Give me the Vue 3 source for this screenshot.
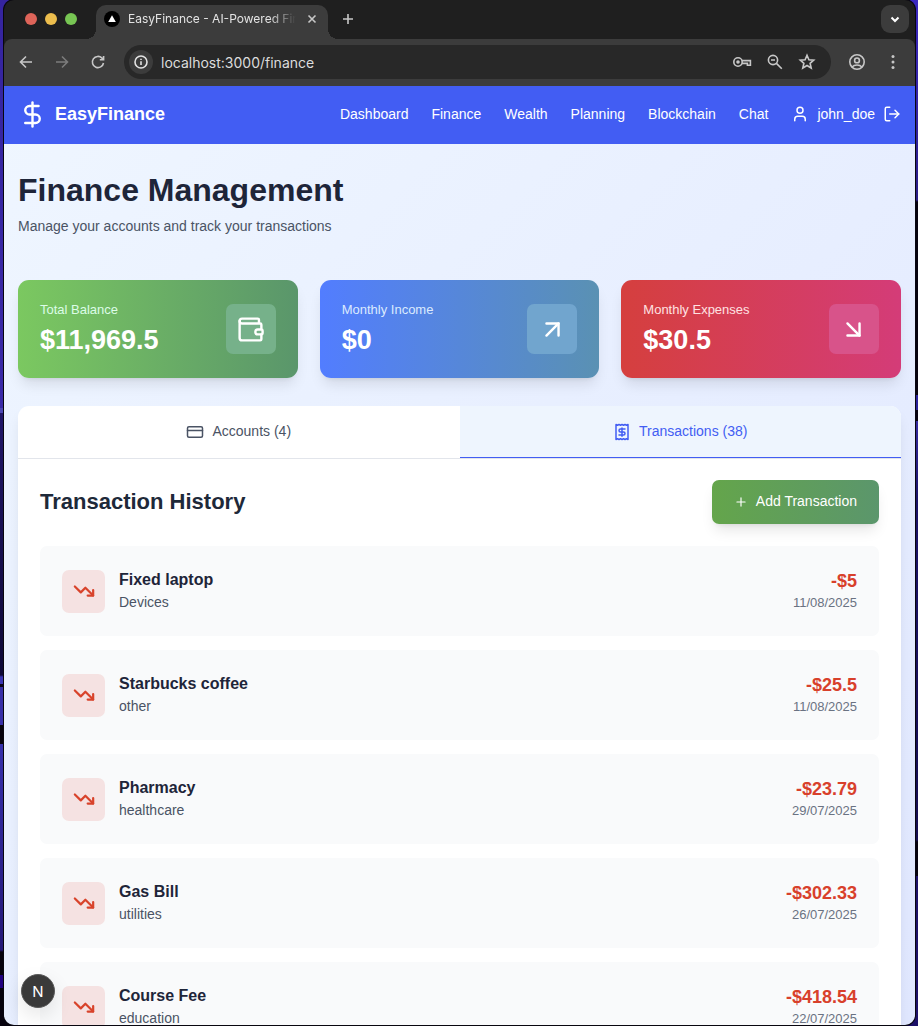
<script setup>
import { ref } from 'vue'

const url = ref('localhost:3000/finance')
const active = ref('transactions')

const links = ['Dashboard', 'Finance', 'Wealth', 'Planning', 'Blockchain', 'Chat']

const icons = {
  dollar: ['M12 2v20', 'M17 5H9.5a3.5 3.5 0 0 0 0 7h5a3.5 3.5 0 0 1 0 7H6'],
  wallet: [
    'M19 7V4a1 1 0 0 0-1-1H5a2 2 0 0 0 0 4h15a1 1 0 0 1 1 1v4h-3a2 2 0 0 0 0 4h3a1 1 0 0 0 1-1v-2a1 1 0 0 0-1-1',
    'M3 5v14a2 2 0 0 0 2 2h15a1 1 0 0 0 1-1v-4'
  ],
  up: ['M7 7h10v10', 'M7 17 17 7'],
  down: ['m7 7 10 10', 'M17 7v10H7'],
  user: ['M19 21v-2a4 4 0 0 0-4-4H9a4 4 0 0 0-4 4v2', 'M16 7a4 4 0 1 1-8 0a4 4 0 1 1 8 0'],
  logout: ['m16 17 5-5-5-5', 'M21 12H9', 'M9 21H5a2 2 0 0 1-2-2V5a2 2 0 0 1 2-2h4'],
  card: ['M4 5h16a2 2 0 0 1 2 2v10a2 2 0 0 1-2 2H4a2 2 0 0 1-2-2V7a2 2 0 0 1 2-2z', 'M2 10h20'],
  receipt: [
    'M4 2v20l2-1 2 1 2-1 2 1 2-1 2 1 2-1 2 1V2l-2 1-2-1-2 1-2-1-2 1-2-1-2 1Z',
    'M16 8h-6a2 2 0 1 0 0 4h4a2 2 0 1 1 0 4H8',
    'M12 17.5v-11'
  ],
  plus: ['M5 12h14', 'M12 5v14'],
  trend: ['m22 17-8.5-8.5-5 5L2 7', 'M16 17h6v-6']
}

const stats = [
  { label: 'Total Balance', value: '$11,969.5', icon: 'wallet', tone: 'green' },
  { label: 'Monthly Income', value: '$0', icon: 'up', tone: 'blue' },
  { label: 'Monthly Expenses', value: '$30.5', icon: 'down', tone: 'red' }
]

const tabs = [
  { id: 'accounts', label: 'Accounts (4)', icon: 'card' },
  { id: 'transactions', label: 'Transactions (38)', icon: 'receipt' }
]

const transactions = [
  { name: 'Fixed laptop', category: 'Devices', amount: '-$5', date: '11/08/2025' },
  { name: 'Starbucks coffee', category: 'other', amount: '-$25.5', date: '11/08/2025' },
  { name: 'Pharmacy', category: 'healthcare', amount: '-$23.79', date: '29/07/2025' },
  { name: 'Gas Bill', category: 'utilities', amount: '-$302.33', date: '26/07/2025' },
  { name: 'Course Fee', category: 'education', amount: '-$418.54', date: '22/07/2025' }
]
</script>

<template>
  <div class="desktop">
    <div class="window">
      <div class="tabstrip">
        <div class="lights">
          <button class="light close" aria-label="Close window"></button>
          <button class="light minimize" aria-label="Minimize window"></button>
          <button class="light zoom" aria-label="Zoom window"></button>
        </div>
        <div class="browser-tab">
          <svg class="favicon" viewBox="0 0 16 16" aria-hidden="true">
            <circle cx="8" cy="8" r="8" fill="#000" />
            <path d="M8 4.2 11.8 11H4.2z" fill="#fff" />
          </svg>
          <span class="tab-title">EasyFinance - AI-Powered Fin</span>
          <button class="plain" aria-label="Close tab">
            <svg width="16" height="16" viewBox="0 0 16 16"><path d="m4.5 4.5 7 7m0-7-7 7" /></svg>
          </button>
        </div>
        <button class="plain new-tab" aria-label="New tab">
          <svg width="16" height="16" viewBox="0 0 16 16"><path d="M8 3v10M3 8h10" /></svg>
        </button>
        <button class="plain tab-search" aria-label="Search tabs">
          <svg width="16" height="16" viewBox="0 0 16 16"><path d="m4.5 6.5 3.5 3.5 3.5-3.5" stroke-width="2" /></svg>
        </button>
      </div>

      <div class="toolbar">
        <div class="history">
          <button class="plain" aria-label="Back">
            <svg width="18" height="18" viewBox="0 0 18 18"><path d="M15 9H3.5M9 3.5 3.5 9 9 14.5" /></svg>
          </button>
          <button class="plain dim" aria-label="Forward">
            <svg width="18" height="18" viewBox="0 0 18 18"><path d="M3 9h11.5M9 3.5 14.5 9 9 14.5" /></svg>
          </button>
          <button class="plain" aria-label="Reload">
            <svg width="18" height="18" viewBox="0 0 18 18"><path d="M14.5 10A5.6 5.6 0 1 1 13 5.1l1.4 1.4M14.6 3v3.8h-3.8" /></svg>
          </button>
        </div>
        <div class="omnibox">
          <button class="plain info" aria-label="Site information">
            <svg width="16" height="16" viewBox="0 0 16 16"><circle cx="8" cy="8" r="6" /><path d="M8 7.3v3.6M8 4.8v1.1" /></svg>
          </button>
          <input v-model="url" class="url" type="text" aria-label="Address" />
          <button class="plain" aria-label="Passwords">
            <svg width="20" height="16" viewBox="0 0 20 16"><circle cx="6" cy="8" r="4.2" /><circle cx="6" cy="8" r="1" fill="currentColor" /><path d="M10 6.6h8.4v4.6h-3V9.4H10" /></svg>
          </button>
          <button class="plain" aria-label="Zoom">
            <svg width="18" height="18" viewBox="0 0 18 18"><circle cx="7" cy="7" r="4.6" /><path d="m10.4 10.4 5.4 5.4M5 7h4" /></svg>
          </button>
          <button class="plain" aria-label="Bookmark">
            <svg width="18" height="18" viewBox="0 0 18 18"><path d="m9 2.3 1.9 4.4 4.8.4-3.6 3.2 1.1 4.7L9 12.5 4.8 15l1.1-4.7L2.3 7.1l4.8-.4z" /></svg>
          </button>
        </div>
        <button class="plain profile" aria-label="Profile">
          <svg width="18" height="18" viewBox="0 0 18 18"><circle cx="9" cy="9" r="7.2" /><circle cx="9" cy="7.4" r="2.4" /><path d="M4 14c1.3-1.4 3-2 5-2s3.7.6 5 2" /></svg>
        </button>
        <button class="plain menu" aria-label="Menu">
          <svg width="18" height="18" viewBox="0 0 18 18"><g fill="currentColor" stroke="none"><circle cx="9" cy="3.6" r="1.5" /><circle cx="9" cy="9" r="1.5" /><circle cx="9" cy="14.4" r="1.5" /></g></svg>
        </button>
      </div>

      <div class="site">
        <header class="navbar">
          <a class="brand" href="#">
            <svg class="icon lg" viewBox="0 0 24 24"><path v-for="d in icons.dollar" :key="d" :d="d" /></svg>
            EasyFinance
          </a>
          <nav class="links">
            <a v-for="l in links" :key="l" href="#">{{ l }}</a>
            <div class="account">
              <a class="user" href="#">
                <svg class="icon sm" viewBox="0 0 24 24"><path v-for="d in icons.user" :key="d" :d="d" /></svg>
                john_doe
              </a>
              <button class="logout" aria-label="Log out">
                <svg class="icon sm" viewBox="0 0 24 24"><path v-for="d in icons.logout" :key="d" :d="d" /></svg>
              </button>
            </div>
          </nav>
        </header>

        <main class="content">
          <h1>Finance Management</h1>
          <p class="subtitle">Manage your accounts and track your transactions</p>

          <section class="stats">
            <article v-for="s in stats" :key="s.label" class="stat" :class="s.tone">
              <div>
                <p class="stat-label">{{ s.label }}</p>
                <p class="stat-value">{{ s.value }}</p>
              </div>
              <span class="stat-icon">
                <svg class="icon lg" viewBox="0 0 24 24"><path v-for="d in icons[s.icon]" :key="d" :d="d" /></svg>
              </span>
            </article>
          </section>

          <section class="panel">
            <div class="tabs">
              <button v-for="t in tabs" :key="t.id" class="tab" :class="{ active: active === t.id }" @click="active = t.id">
                <svg class="icon sm" viewBox="0 0 24 24"><path v-for="d in icons[t.icon]" :key="d" :d="d" /></svg>
                <span>{{ t.label }}</span>
              </button>
            </div>
            <div class="panel-body">
              <div class="panel-head">
                <h2>Transaction History</h2>
                <button class="add">
                  <svg class="icon xs" viewBox="0 0 24 24"><path v-for="d in icons.plus" :key="d" :d="d" /></svg>
                  <span>Add Transaction</span>
                </button>
              </div>
              <ul class="list">
                <li v-for="t in transactions" :key="t.name" class="row">
                  <span class="row-icon">
                    <svg class="icon md" viewBox="0 0 24 24"><path v-for="d in icons.trend" :key="d" :d="d" /></svg>
                  </span>
                  <div class="row-main">
                    <h3>{{ t.name }}</h3>
                    <p class="category">{{ t.category }}</p>
                  </div>
                  <div class="row-end">
                    <p class="amount">{{ t.amount }}</p>
                    <p class="date">{{ t.date }}</p>
                  </div>
                </li>
              </ul>
            </div>
          </section>
        </main>
      </div>
      <button class="dev-badge" aria-label="Open dev tools"><span>N</span></button>
    </div>
  </div>
</template>

<style>
body {
  margin: 0;
}
</style>

<style scoped>
* {
  box-sizing: border-box;
}
h1, h2, h3, p, ul {
  margin: 0;
  padding: 0;
}
button {
  font: inherit;
  color: inherit;
  border: 0;
  background: none;
  padding: 0;
  cursor: pointer;
}
a {
  color: inherit;
  text-decoration: none;
}
.desktop {
  height: 100vh;
  padding: 0 3px 1px 4px;
  overflow: hidden;
  font-family: "Liberation Sans", Arial, sans-serif;
  font-size: 14px;
  background:
    linear-gradient(#35249f 0, #3a2aa8 408px, #4d48b4 408px, #4d48b4 413px, #201668 413px, #0d0838 675px, #3a35b4 677px, #3a35b4 684px, #08041c 684px, #08041c 687px, #372fa8 687px, #372fa8 725px, #06020e 725px, #06020e 744px, #3630ac 744px, #241878 950px, #06020e 952px, #06020e 975px, #200080 975px, #200080 988px, #06020e 988px) left / 50% 100% no-repeat,
    linear-gradient(#3a28c0 0, #2a1c86 200px, #06020e 202px, #06020e 395px, #28209a 395px, #28209a 410px, #06020e 410px, #06020e 421px, #352aa0 421px, #1a1268 500px, #140c50 840px, #06020e 842px, #06020e 876px, #1c1068 876px) right / 50% 100% no-repeat;
}
.window {
  position: relative;
  height: 100%;
  display: flex;
  flex-direction: column;
  overflow: hidden;
  border-radius: 10px;
  background: #1f1f1f;
  box-shadow: 0 0 0 1px #08060f;
}

/* Browser chrome */
.tabstrip {
  flex: none;
  display: flex;
  align-items: center;
  height: 39px;
  padding: 0 6px 0 21px;
  font-family: Inter, Roboto, sans-serif;
  color: #e3e3e3;
}
.lights,
.new-tab,
.tab-search {
  margin-bottom: 2px;
}
.lights {
  display: flex;
  gap: 8px;
  width: 71px;
}
.light {
  width: 12px;
  height: 12px;
  border-radius: 50%;
}
.close { background: #de6459; }
.minimize { background: #ecbd4d; }
.zoom { background: #77c553; }
.browser-tab {
  position: relative;
  display: flex;
  align-items: center;
  align-self: flex-end;
  gap: 8px;
  width: 232px;
  height: 34px;
  padding: 0 8px 6px;
  border-radius: 10px 10px 0 0;
  background: #3c3c3c;
}
.browser-tab::before,
.browser-tab::after {
  content: "";
  position: absolute;
  bottom: 0;
  width: 10px;
  height: 10px;
}
.browser-tab::before {
  right: 100%;
  background: radial-gradient(circle at 0 0, transparent 10px, #3c3c3c 10px);
}
.browser-tab::after {
  left: 100%;
  background: radial-gradient(circle at 100% 0, transparent 10px, #3c3c3c 10px);
}
.favicon {
  flex: none;
  width: 16px;
  height: 16px;
}
.tab-title {
  flex: 1;
  min-width: 0;
  white-space: nowrap;
  font-size: 12px;
  line-height: 16px;
  mask-image: linear-gradient(90deg, #000 84%, transparent);
}
.plain {
  display: flex;
  align-items: center;
  justify-content: center;
  color: #c7c7c7;
}
.plain svg {
  fill: none;
  stroke: currentColor;
  stroke-width: 1.6;
}
.new-tab {
  margin-left: 12px;
}
.tab-search {
  width: 28px;
  height: 28px;
  margin-left: auto;
  border-radius: 9px;
  background: #3c3c3c;
  color: #fff;
}
.toolbar {
  flex: none;
  display: flex;
  align-items: center;
  height: 47px;
  padding: 0 13px 1px;
  border-radius: 8px 8px 0 0;
  background: #3c3c3c;
}
.history {
  display: flex;
  gap: 18px;
  width: 107px;
}
.dim {
  color: #7c7c7c;
}
.omnibox {
  flex: 1;
  display: flex;
  align-items: center;
  gap: 14px;
  height: 34px;
  padding: 0 15px 0 5px;
  border-radius: 17px;
  background: #282828;
}
.info {
  width: 24px;
  height: 24px;
  border-radius: 50%;
  background: #3c3c3c;
  color: #e3e3e3;
}
.url {
  flex: 1;
  min-width: 0;
  margin-left: -6px;
  padding: 0;
  border: 0;
  outline: 0;
  background: none;
  color: #dcdcdc;
  font-family: Inter, Roboto, sans-serif;
  font-size: 14px;
}
.profile {
  margin: 0 18px 0 17px;
}

/* Site */
.site {
  flex: 1;
  min-height: 0;
  overflow: hidden;
  background: linear-gradient(135deg, #eff6ff, #e0e7ff);
}
.icon {
  flex: none;
  fill: none;
  stroke: currentColor;
  stroke-width: 2;
  stroke-linecap: round;
  stroke-linejoin: round;
}
.icon.xs { width: 14px; height: 14px; }
.icon.sm { width: 18px; height: 18px; }
.icon.md { width: 22px; height: 22px; stroke-width: 2.4; }
.icon.lg { width: 29px; height: 29px; }
.navbar {
  display: flex;
  align-items: center;
  justify-content: space-between;
  height: 58px;
  padding: 0 14px 2px;
  background: #425df3;
  color: #fff;
}
.brand {
  display: flex;
  align-items: center;
  gap: 8px;
  font-size: 18px;
  font-weight: 700;
}
.links {
  display: flex;
  align-items: center;
  gap: 23px;
}
.account,
.user {
  display: flex;
  align-items: center;
  gap: 8px;
}
.logout {
  display: flex;
}
.content {
  padding: 28px 14px;
}
h1 {
  font-size: 32px;
  line-height: 36px;
  color: #1e2539;
}
.subtitle {
  margin-top: 7px;
  line-height: 22px;
  color: #4a5364;
}
.stats {
  display: grid;
  grid-template-columns: repeat(3, 1fr);
  gap: 22px;
  margin-top: 43px;
}
.stat {
  display: flex;
  align-items: center;
  justify-content: space-between;
  padding: 22px;
  border-radius: 11px;
  color: #fff;
  box-shadow: 0 9px 14px -3px rgba(0, 0, 0, 0.1), 0 4px 5px -4px rgba(0, 0, 0, 0.1);
}
.green { background: linear-gradient(90deg, #7bc860, #5a966b); }
.blue { background: linear-gradient(90deg, #527dff, #5a91b3); }
.red { background: linear-gradient(90deg, #d53f3e, #d43c78); }
.stat-label {
  font-size: 13px;
  line-height: 16px;
}
.green .stat-label { color: #dcfce7; }
.blue .stat-label { color: #dbeafe; }
.red .stat-label { color: #ffe2e2; }
.stat-value {
  margin-top: 6px;
  font-size: 27px;
  line-height: 32px;
  font-weight: 700;
}
.stat-icon {
  display: flex;
  align-items: center;
  justify-content: center;
  width: 50px;
  height: 50px;
  border-radius: 7px;
}
.green .stat-icon { background: #76b18a; }
.blue .stat-icon { background: #71a5ce; }
.red .stat-icon { background: #d8538a; }
.panel {
  margin-top: 28px;
  overflow: hidden;
  border-radius: 11px;
  background: #fff;
  box-shadow: 0 9px 14px -3px rgba(0, 0, 0, 0.1), 0 4px 5px -4px rgba(0, 0, 0, 0.1);
}
.tabs {
  display: flex;
  border-bottom: 1px solid #e2e5eb;
}
.tab {
  flex: 1;
  display: flex;
  align-items: center;
  justify-content: center;
  gap: 8px;
  height: 52px;
  color: #4a5364;
}
.tab span,
.add span {
  padding-bottom: 2px;
}
.tab.active {
  border-bottom: 1px solid #425df3;
  background: #eef5fe;
  color: #425df3;
}
.panel-body {
  padding: 21px 22px;
}
.panel-head {
  display: flex;
  align-items: center;
  justify-content: space-between;
}
h2 {
  font-size: 22px;
  line-height: 28px;
  color: #1e2939;
}
.add {
  display: flex;
  align-items: center;
  gap: 8px;
  height: 44px;
  padding: 0 22px;
  border-radius: 7px;
  background: linear-gradient(90deg, #64a54b, #5b966c);
  color: #fff;
  box-shadow: 0 9px 14px -3px rgba(0, 0, 0, 0.1), 0 4px 5px -4px rgba(0, 0, 0, 0.1);
}
.list {
  display: grid;
  gap: 14px;
  margin-top: 22px;
  list-style: none;
}
.row {
  display: flex;
  align-items: center;
  gap: 14px;
  padding: 22px;
  border-radius: 7px;
  background: #f9fafb;
}
.row-icon {
  display: flex;
  align-items: center;
  justify-content: center;
  width: 43px;
  height: 43px;
  border-radius: 7px;
  background: #f5e2e2;
  color: #d8432b;
}
.row-main {
  flex: 1;
  padding-bottom: 2px;
}
h3 {
  font-size: 16px;
  line-height: 24px;
  color: #1e2539;
}
.category {
  line-height: 20px;
  color: #4a5364;
}
.row-end {
  padding-bottom: 2px;
  text-align: right;
}
.amount {
  font-size: 18px;
  line-height: 25px;
  font-weight: 700;
  color: #d8402b;
}
.date {
  font-size: 13px;
  line-height: 18px;
  color: #6a7282;
}
.dev-badge {
  position: absolute;
  left: 17px;
  bottom: 17px;
  width: 34px;
  height: 34px;
  border: 1px solid #5a5a5a;
  border-radius: 50%;
  background: #3a3a3a;
  box-shadow: 0 8px 20px rgba(0, 0, 0, 0.1);
  color: #fff;
}
.dev-badge span {
  font-family: Inter, sans-serif;
  font-size: 15px;
}
</style>
